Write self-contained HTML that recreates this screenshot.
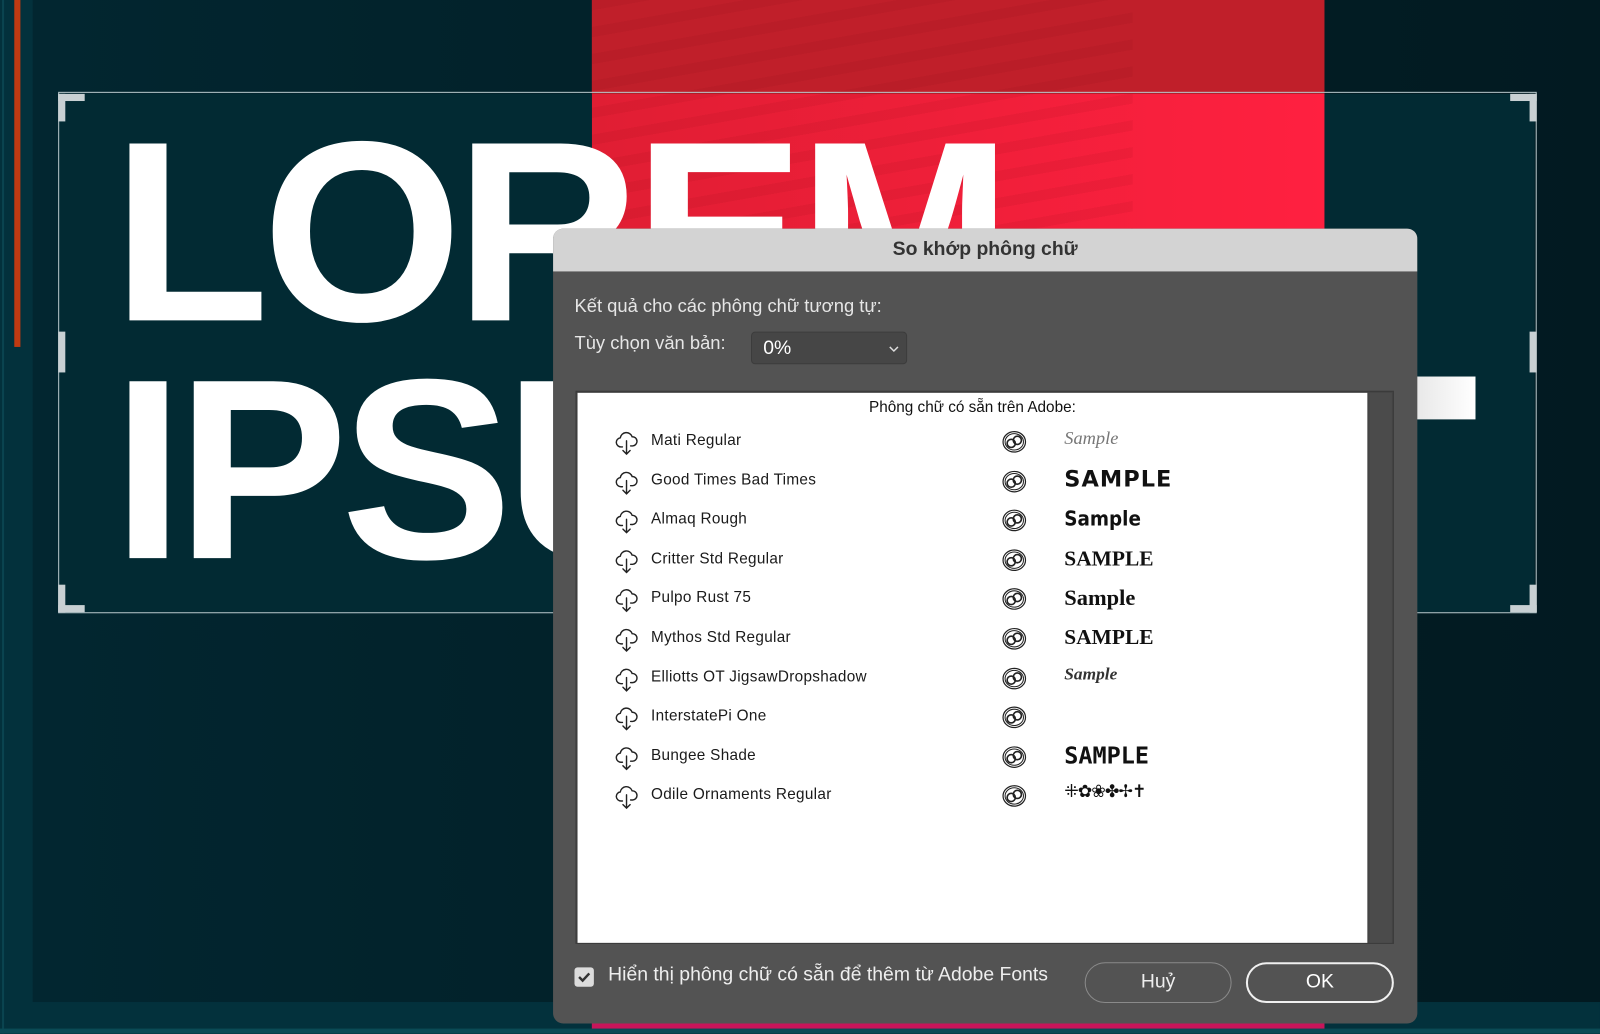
<!DOCTYPE html>
<html><head><meta charset="utf-8">
<style>
*{margin:0;padding:0;box-sizing:border-box}
html,body{width:1600px;height:1033px;overflow:hidden;background:#02222b;font-family:"Liberation Sans","DejaVu Sans",sans-serif}
#wrap{position:absolute;left:0;top:0;width:1568px;height:1013px;transform:scale(1.0204);transform-origin:0 0}
.abs{position:absolute}
.big{position:absolute;color:#fff;font-weight:bold;font-size:252px;line-height:1;letter-spacing:-7px;white-space:nowrap}
.row{position:absolute;left:0;width:774px;height:38px}
.row .nm{position:absolute;left:72px;top:0;font-size:15px;color:#1a1a1a;letter-spacing:0.3px}
.row svg.cl{position:absolute;left:36px;top:-2px}
.row svg.cc{position:absolute;left:415px;top:-3px}
.row .sm{position:absolute;left:477px;top:-4px;color:#111;white-space:nowrap}
</style></head><body>
<div id="wrap">
<div class="abs" style="left:0;top:0;width:1568px;height:1013px;background:#03313c"></div>
<div class="abs" style="left:32px;top:0;width:1536px;height:982px;background:linear-gradient(90deg,#022630 0%,#022129 40%,#021a21 100%)"></div>
<div class="abs" style="left:14px;top:0;width:6px;height:340px;background:#c03a12"></div>
<div class="abs" style="left:2px;top:0;width:2px;height:1013px;background:#0a4450"></div>
<div class="abs" style="left:580px;top:0;width:718px;height:92px;background:#c01f2a"></div>
<div class="abs" style="left:580px;top:92px;width:718px;height:890px;background:linear-gradient(90deg,#e01e33,#ff2040)"></div>
<div class="abs" style="left:580px;top:0;width:530px;height:560px;background:repeating-linear-gradient(170deg,rgba(120,0,10,0.08) 0 10px,rgba(0,0,0,0) 10px 26px)"></div>
<div class="abs" style="left:580px;top:975px;width:718px;height:35px;background:#c8155a"></div>
<div class="abs" style="left:0;top:1008px;width:1568px;height:5px;background:#0a4a55"></div>
<div class="abs" style="left:58px;top:92px;width:522px;height:508px;background:#022a33"></div>
<div class="abs" style="left:1298px;top:92px;width:206px;height:508px;background:#022a33"></div>
<div class="big" style="left:110px;top:102px">LOREM</div>
<div class="big" style="left:110px;top:335px">IPSUM</div>
<div class="abs" style="left:1388px;top:369px;width:58px;height:42px;background:linear-gradient(90deg,#e8e8e8,#fff)"></div>
<div class="abs" style="left:57px;top:90px;width:1449px;height:511px;border:1px solid #b8c8cc"></div>
<div class="abs" style="left:57px;top:92px;width:26px;height:7px;background:#c8d0d3"></div>
<div class="abs" style="left:57px;top:92px;width:7px;height:27px;background:#c8d0d3"></div>
<div class="abs" style="left:1480px;top:92px;width:26px;height:7px;background:#c8d0d3"></div>
<div class="abs" style="left:1499px;top:92px;width:7px;height:27px;background:#c8d0d3"></div>
<div class="abs" style="left:57px;top:593px;width:26px;height:7px;background:#c8d0d3"></div>
<div class="abs" style="left:57px;top:573px;width:7px;height:27px;background:#c8d0d3"></div>
<div class="abs" style="left:1480px;top:593px;width:26px;height:7px;background:#c8d0d3"></div>
<div class="abs" style="left:1499px;top:573px;width:7px;height:27px;background:#c8d0d3"></div>
<div class="abs" style="left:57px;top:325px;width:7px;height:40px;background:#c8d0d3"></div>
<div class="abs" style="left:1499px;top:325px;width:7px;height:40px;background:#c8d0d3"></div>

<div class="abs" style="left:542px;top:224px;width:847px;height:779px;background:#535353;border-radius:10px;overflow:hidden">
  <div style="height:42px;background:#d3d3d3;text-align:center;font-size:19px;font-weight:bold;color:#333;line-height:42px">So khớp phông chữ</div>
  <div class="abs" style="left:21px;top:66px;font-size:18px;color:#e6e6e6">Kết quả cho các phông chữ tương tự:</div>
  <div class="abs" style="left:21px;top:102px;font-size:18px;color:#e6e6e6">Tùy chọn văn bản:</div>
  <div class="abs" style="left:194px;top:101px;width:153px;height:32px;background:#464646;border:1px solid #3c3c3c;border-radius:4px;color:#fff;font-size:19px;line-height:32px;padding-left:11px">0%
    <svg class="abs" style="left:134px;top:12px" width="10" height="8" viewBox="0 0 10 8"><path d="M1 2l4 4 4-4" fill="none" stroke="#ddd" stroke-width="1.4"/></svg>
  </div>
  <div class="abs" style="left:22px;top:159px;width:802px;height:542px;background:#444;border:1px solid #3a3a3a"></div>
  <div class="abs" style="left:24px;top:161px;width:774px;height:539px;background:#fff">
    <div class="abs" style="left:0;top:6px;width:774px;text-align:center;font-size:15px;color:#111">Phông chữ có sẵn trên Adobe:</div>
  </div>
  <div class="abs" style="left:800px;top:161px;width:22px;height:539px;background:#4b4b4b"></div>
  <div id="rows" class="abs" style="left:24px;top:161px;width:774px;height:539px"></div>
  <div class="abs" style="left:21px;top:724px;width:19px;height:19px;background:#dcdcdc;border-radius:3px">
    <svg width="19" height="19" viewBox="0 0 19 19"><path d="M4.5 9.5l3.5 3.5 6.5-7" fill="none" stroke="#333" stroke-width="2.4"/></svg>
  </div>
  <div class="abs" style="left:54px;top:721px;font-size:19px;color:#eee">Hiển thị phông chữ có sẵn để thêm từ Adobe Fonts</div>
  <div class="abs" style="left:521px;top:719px;width:144px;height:40px;border:1.5px solid #8a8a8a;border-radius:20px;color:#eee;font-size:19px;text-align:center;line-height:37px">Huỷ</div>
  <div class="abs" style="left:679px;top:719px;width:145px;height:40px;border:2px solid #f0f0f0;border-radius:20px;color:#fff;font-size:19px;text-align:center;line-height:36px">OK</div>
</div>
</div>

<svg width="0" height="0" style="position:absolute">
  <defs>
    <symbol id="cloud" viewBox="0 0 24 26"><path d="M8 17H6.5a4.5 4.5 0 0 1-.6-8.96A6 6 0 0 1 17.5 7a4.5 4.5 0 0 1 .5 9 h-2" fill="none" stroke="#222" stroke-width="1.4" stroke-linecap="round"/><path d="M12 11v13M8.5 20.5L12 24l3.5-3.5" fill="none" stroke="#222" stroke-width="1.4" stroke-linecap="round"/></symbol>
    <symbol id="ccl" viewBox="0 0 26 26"><ellipse cx="13" cy="13" rx="11" ry="10" fill="none" stroke="#222" stroke-width="1.2"/><ellipse cx="13" cy="13" rx="9" ry="8" fill="none" stroke="#222" stroke-width="1"/><circle cx="10" cy="14.5" r="4" fill="none" stroke="#222" stroke-width="1.6"/><circle cx="16" cy="11.5" r="4" fill="none" stroke="#222" stroke-width="1.6"/></symbol>
  </defs>
</svg>
<script>
var rows=[
["Mati Regular",'<span style="font-family:\'Liberation Serif\',serif;font-style:italic;font-size:18px;color:#777">Sample</span>'],
["Good Times Bad Times",'<span style="font-family:\'DejaVu Sans\',sans-serif;font-weight:bold;font-size:22px;letter-spacing:1px">SAMPLE</span>'],
["Almaq Rough",'<span style="font-weight:bold;font-size:20px;font-family:\'DejaVu Sans Condensed\',\'DejaVu Sans\',sans-serif">Sample</span>'],
["Critter Std Regular",'<span style="font-family:\'Liberation Serif\',serif;font-weight:bold;font-size:21px">SAMPLE</span>'],
["Pulpo Rust 75",'<span style="font-family:\'Liberation Serif\',serif;font-weight:bold;font-size:22px">Sample</span>'],
["Mythos Std Regular",'<span style="font-family:\'Liberation Serif\',serif;font-weight:bold;font-size:21px">SAMPLE</span>'],
["Elliotts OT JigsawDropshadow",'<span style="font-family:\'Liberation Serif\',serif;font-weight:bold;font-style:italic;font-size:17px;color:#333">Sample</span>'],
["InterstatePi One",''],
["Bungee Shade",'<span style="font-family:\'DejaVu Sans Mono\',monospace;font-weight:bold;font-size:23px">SAMPLE</span>'],
["Odile Ornaments Regular",'<span style="font-family:\'DejaVu Sans\',sans-serif;font-size:17px;letter-spacing:-1px">⁜✿❀✤✢✝</span>']
];
var h='';
for(var i=0;i<rows.length;i++){
 var t=38+i*38.6;
 h+='<div class="row" style="top:'+t+'px"><svg class="cl" width="24" height="26"><use href="#cloud"/></svg><div class="nm">'+rows[i][0]+'</div><svg class="cc" width="26" height="26"><use href="#ccl"/></svg><div class="sm">'+rows[i][1]+'</div></div>';
}
document.getElementById('rows').innerHTML=h;
</script>
</body></html>
